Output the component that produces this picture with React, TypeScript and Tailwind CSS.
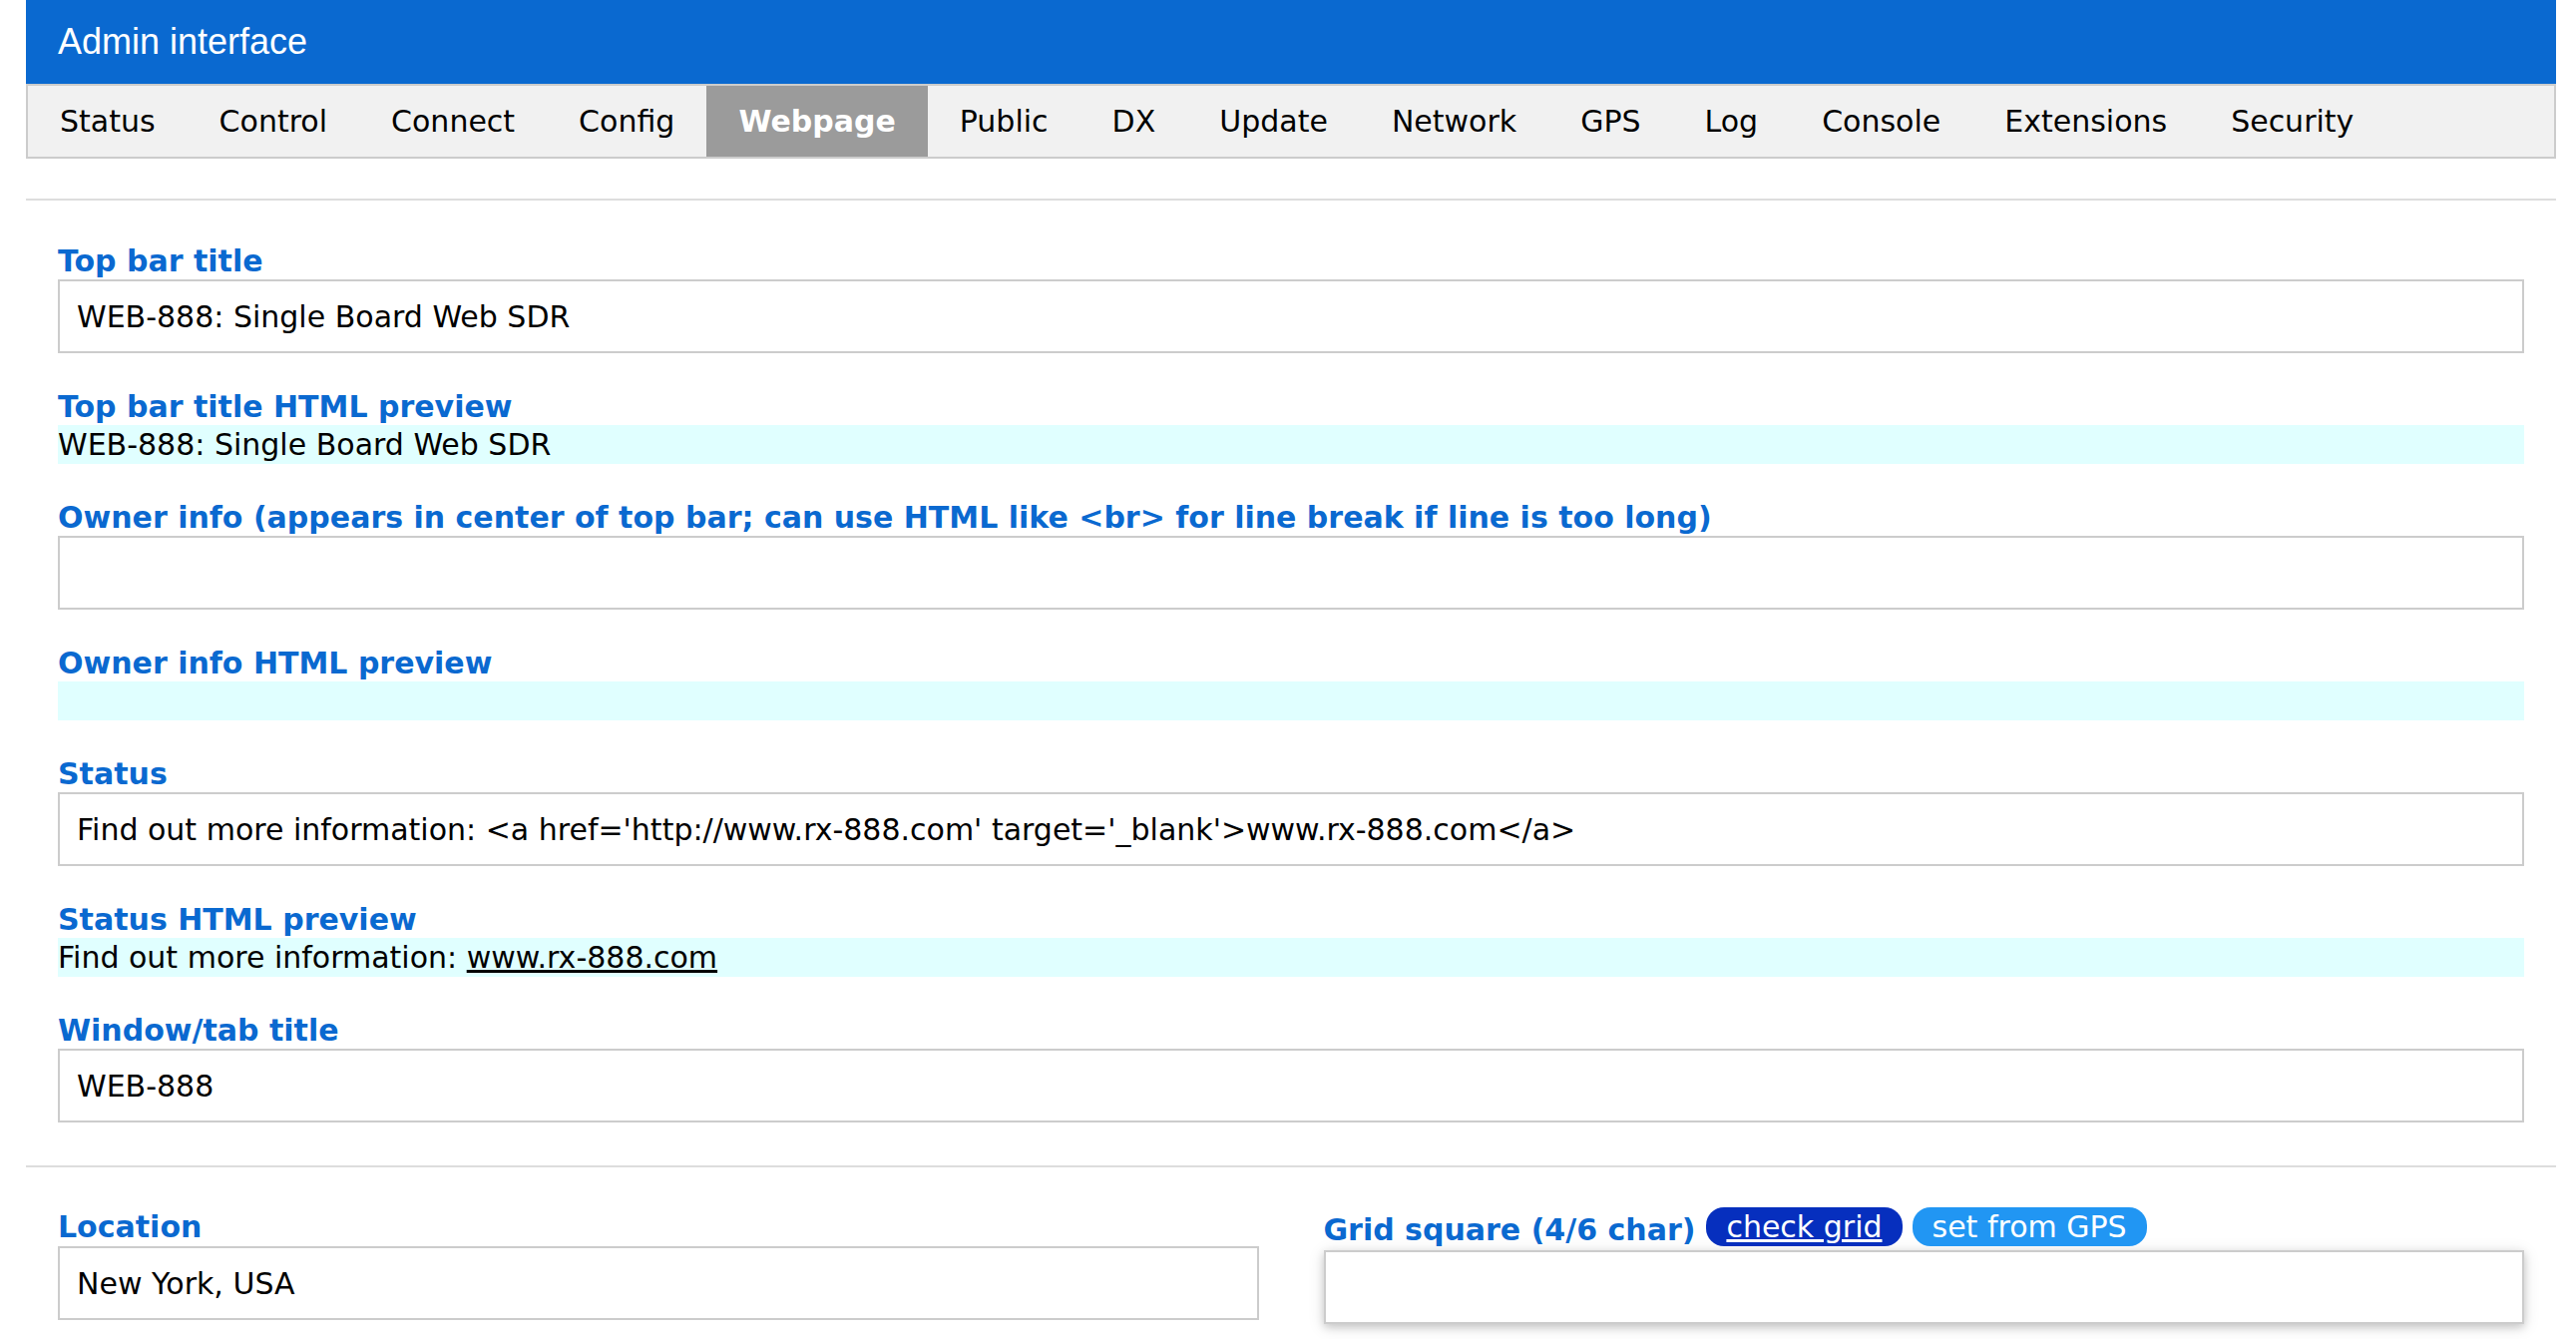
import { useState } from 'react'

const tabs = ['Status', 'Control', 'Connect', 'Config', 'Webpage', 'Public', 'DX', 'Update', 'Network', 'GPS', 'Log', 'Console', 'Extensions', 'Security']

function Label({ children }: { children: React.ReactNode }) {
  return <div className="text-[30px] font-bold leading-[37px] text-[#0a69d0]">{children}</div>
}

function TextInput({ value, shadow }: { value: string; shadow?: boolean }) {
  return (
    <input
      readOnly
      value={value}
      className={
        shadow
          ? 'block h-[74px] w-full border-2 border-[#ccc] bg-white px-[17px] text-[30px] text-black shadow-[0_3px_8px_0_rgba(0,0,0,0.16),0_3px_16px_0_rgba(0,0,0,0.12)] outline-none'
          : 'block h-[74px] w-full border-2 border-[#ccc] bg-white px-[17px] text-[30px] text-black outline-none'
      }
    />
  )
}

function Preview({ children }: { children?: React.ReactNode }) {
  return <div className="h-[39px] bg-[#e0ffff] text-[30px] leading-[39px] text-black">{children}</div>
}

export default function App() {
  const [active, setActive] = useState('Webpage')

  return (
    <div className="min-h-screen bg-white pl-[26px] pr-[20px] font-['DejaVu_Sans',sans-serif] text-black">
      {/* top bar */}
      <header className="flex h-[84px] items-center bg-[#0a69d0] px-[32px] font-['Liberation_Sans',Arial,sans-serif] text-[36px] text-white">
        Admin interface
      </header>

      {/* tabs */}
      <nav className="flex h-[75px] border-2 border-[#ccc] bg-[#f1f1f1]">
        {tabs.map((tab) => (
          <button
            key={tab}
            onClick={() => setActive(tab)}
            className={
              tab === active
                ? 'flex h-full items-center bg-[#9b9b9b] px-[32px] text-[30px] font-bold text-white'
                : 'flex h-full items-center px-[32px] text-[30px] text-black'
            }
          >
            {tab}
          </button>
        ))}
      </nav>

      <div className="mt-[40px] h-[2px] bg-[#ddd]" />

      <div className="flex flex-col gap-[35px] px-[32px] pt-[42px]">
        <div>
          <Label>Top bar title</Label>
          <TextInput value="WEB-888: Single Board Web SDR" />
        </div>
        <div>
          <Label>Top bar title HTML preview</Label>
          <Preview>WEB-888: Single Board Web SDR</Preview>
        </div>
        <div>
          <Label>Owner info (appears in center of top bar; can use HTML like &lt;br&gt; for line break if line is too long)</Label>
          <TextInput value="" />
        </div>
        <div>
          <Label>Owner info HTML preview</Label>
          <Preview />
        </div>
        <div>
          <Label>Status</Label>
          <TextInput value="Find out more information: <a href='http://www.rx-888.com' target='_blank'>www.rx-888.com</a>" />
        </div>
        <div>
          <Label>Status HTML preview</Label>
          <Preview>
            Find out more information: <a className="underline">www.rx-888.com</a>
          </Preview>
        </div>
        <div>
          <Label>Window/tab title</Label>
          <TextInput value="WEB-888" />
        </div>
      </div>

      <div className="mt-[43px] h-[2px] bg-[#ddd]" />

      <div className="grid grid-cols-2 gap-x-[65px] px-[32px] pt-[40px]">
        <div>
          <div className="text-[30px] font-bold leading-[39px] text-[#0a69d0]">Location</div>
          <TextInput value="New York, USA" />
        </div>
        <div>
          <div className="flex h-[43px] items-start">
            <div className="mt-[4px] text-[30px] font-bold leading-[37px] text-[#0a69d0]">Grid square (4/6 char)</div>
            <button className="ml-[11px] h-[39px] rounded-[18px] bg-[#062fbe] px-[20px] text-[30px] leading-[39px] text-white underline">
              check grid
            </button>
            <button className="ml-[10px] h-[39px] rounded-[18px] bg-[#2196f3] px-[20px] text-[30px] leading-[39px] text-white">
              set from GPS
            </button>
          </div>
          <TextInput value="" shadow />
        </div>
      </div>
    </div>
  )
}
